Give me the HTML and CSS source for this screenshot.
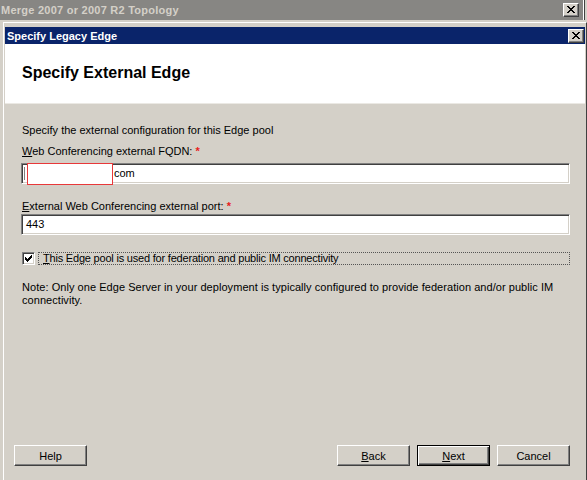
FILE: index.html
```html
<!DOCTYPE html>
<html>
<head>
<meta charset="utf-8">
<link rel="stylesheet" href="styles.css">
</head>
<body>
<div class="screen">
  <div class="outer-title">
    <span class="title-text outer-text">Merge 2007 or 2007 R2 Topology</span>
    <span class="xbtn"><svg width="8" height="7" viewBox="0 0 8 7"><path d="M0 0h2v1h1v1h2V1h1V0h2v1H7v1H6v1H5v1h1v1h1v1h1v1H6V6H5V5H3v1H2v1H0V6h1V5h1V4h1V3H2V2H1V1H0z" fill="#000"/></svg></span>
  </div>
  <div class="dialog">
    <div class="dlg-title">
      <span class="title-text">Specify Legacy Edge</span>
      <span class="xbtn"><svg width="8" height="7" viewBox="0 0 8 7"><path d="M0 0h2v1h1v1h2V1h1V0h2v1H7v1H6v1H5v1h1v1h1v1h1v1H6V6H5V5H3v1H2v1H0V6h1V5h1V4h1V3H2V2H1V1H0z" fill="#000"/></svg></span>
    </div>
    <div class="header">
      <h1>Specify External Edge</h1>
    </div>
    <div class="content">
      <p class="intro">Specify the external configuration for this Edge pool</p>
      <div class="label l1"><u>W</u>eb Conferencing external FQDN: <span class="req">*</span></div>
      <div class="field f1">
        <span class="caret"></span>
        <span class="redact"></span>
        <span class="suffix">com</span>
      </div>
      <div class="label l2"><u>E</u>xternal Web Conferencing external port: <span class="req">*</span></div>
      <div class="field f2"><span class="value">443</span></div>
      <div class="check-row">
        <span class="checkbox"><svg width="7" height="7" viewBox="0 0 7 7"><path d="M0 2h1v1h1v1h1V3h1V2h1V1h1V0h1v3H6v1H5v1H4v1H3v1H2V6H1V5H0z" fill="#000"/></svg></span>
        <span class="check-label"><u>T</u>his Edge pool is used for federation and public IM connectivity</span>
      </div>
      <p class="note">Note: Only one Edge Server in your deployment is typically configured to provide federation and/or public IM connectivity.</p>
    </div>
    <div class="buttons">
      <button class="btn">Help</button>
      <span class="spacer"></span>
      <button class="btn"><u>B</u>ack</button>
      <button class="btn default"><u>N</u>ext</button>
      <button class="btn">Cancel</button>
    </div>
  </div>
</div>
</body>
</html>
```

FILE: styles.css
```css
* { box-sizing: border-box; }
html, body { margin: 0; padding: 0; }
body {
  width: 587px;
  height: 480px;
  overflow: hidden;
  background: #d4d0c8;
  font-family: "Liberation Sans", Arial, sans-serif;
  font-size: 11px;
  color: #000;
}
.screen {
  display: flex;
  flex-direction: column;
  height: 480px;
}
.outer-title {
  height: 20px;
  margin-right: 2px;
  background: #878683;
  border-right: 1px solid #404040;
  box-shadow: inset -1px 0 0 #fff;
  color: #d4d0c8;
  display: flex;
  align-items: center;
  justify-content: space-between;
  padding: 0 5px 0 1px;
  flex-shrink: 0;
}
.title-text {
  font-weight: bold;
  font-size: 11px;
}
.outer-text { letter-spacing: 0.25px; }
.xbtn {
  width: 16px;
  height: 14px;
  background: #d4d0c8;
  border-top: 1px solid #fff;
  border-left: 1px solid #fff;
  border-right: 1px solid #404040;
  border-bottom: 1px solid #404040;
  box-shadow: inset -1px -1px 0 #808080;
  display: flex;
  align-items: center;
  justify-content: center;
  padding: 0 1px 1px 0;
}
.dialog {
  flex: 1;
  margin: 2px 0 0 3px;
  border-top: 1px solid #fff;
  border-left: 1px solid #fff;
  border-right: 1px solid #404040;
  padding: 4px 1px 0 1px;
  display: flex;
  flex-direction: column;
}
.dlg-title {
  height: 17px;
  background: #0a246a;
  color: #fff;
  display: flex;
  align-items: center;
  justify-content: space-between;
  padding: 0 1px 0 2px;
  flex-shrink: 0;
}
.header {
  height: 60px;
  background: #fff;
  border-bottom: 1px solid #ebe9e4;
  display: flex;
  align-items: center;
  padding-left: 17px;
  flex-shrink: 0;
}
.header h1 {
  margin: 0 0 2px 0;
  font-size: 16px;
  line-height: 20px;
  font-weight: bold;
}
.content {
  padding: 0 15px 0 17px;
  display: flex;
  flex-direction: column;
  line-height: 13px;
}
.intro { margin: 20px 0 0 0; }
.l1 { margin-top: 8px; }
.l2 { margin-top: 16px; }
.req { color: #e8201c; font-weight: bold; }
.field {
  position: relative;
  height: 21px;
  margin-left: -1px;
  background: #fff;
  border-top: 1px solid #808080;
  border-left: 1px solid #808080;
  border-bottom: 1px solid #fff;
  border-right: 1px solid #fff;
  box-shadow: inset 1px 1px 0 #404040, inset -1px -1px 0 #d4d0c8;
  display: flex;
  align-items: center;
  padding-left: 4px;
}
.f1 { margin-top: 5px; padding-left: 92px; }
.f2 { margin-top: 1px; }
.caret {
  position: absolute;
  left: 2px;
  top: 3px;
  width: 1px;
  height: 13px;
  background: #808080;
}
.redact {
  position: absolute;
  left: 5px;
  top: -1px;
  width: 86px;
  height: 22px;
  background: #fff;
  border: 1px solid #e8383a;
}
.check-row {
  margin-top: 17px;
  display: flex;
  align-items: center;
  height: 13px;
}
.checkbox {
  width: 13px;
  height: 13px;
  background: #fff;
  border-top: 1px solid #808080;
  border-left: 1px solid #808080;
  border-bottom: 1px solid #fff;
  border-right: 1px solid #fff;
  box-shadow: inset 1px 1px 0 #404040, inset -1px -1px 0 #d4d0c8;
  display: flex;
  align-items: center;
  justify-content: center;
  flex-shrink: 0;
}
.check-label {
  flex: 1;
  margin-left: 3px;
  padding-left: 4px;
  height: 13px;
  border: 1px dotted #555;
  line-height: 11px;
  letter-spacing: -0.2px;
}
.note { margin: 16px 0 0 0; letter-spacing: 0.05px; }
.buttons {
  margin-top: 138px;
  display: flex;
  gap: 7px;
  padding: 0 15px 0 9px;
}
.spacer { flex: 1; }
.btn {
  width: 73px;
  height: 21px;
  padding: 0;
  font-family: inherit;
  font-size: 11px;
  color: #000;
  background: #d4d0c8;
  border-top: 1px solid #fff;
  border-left: 1px solid #fff;
  border-right: 1px solid #404040;
  border-bottom: 1px solid #404040;
  box-shadow: inset -1px -1px 0 #808080;
}
.btn.default {
  border: 1px solid #000;
  box-shadow: inset 1px 1px 0 #fff, inset -1px -1px 0 #404040, inset -2px -2px 0 #808080;
}
```
